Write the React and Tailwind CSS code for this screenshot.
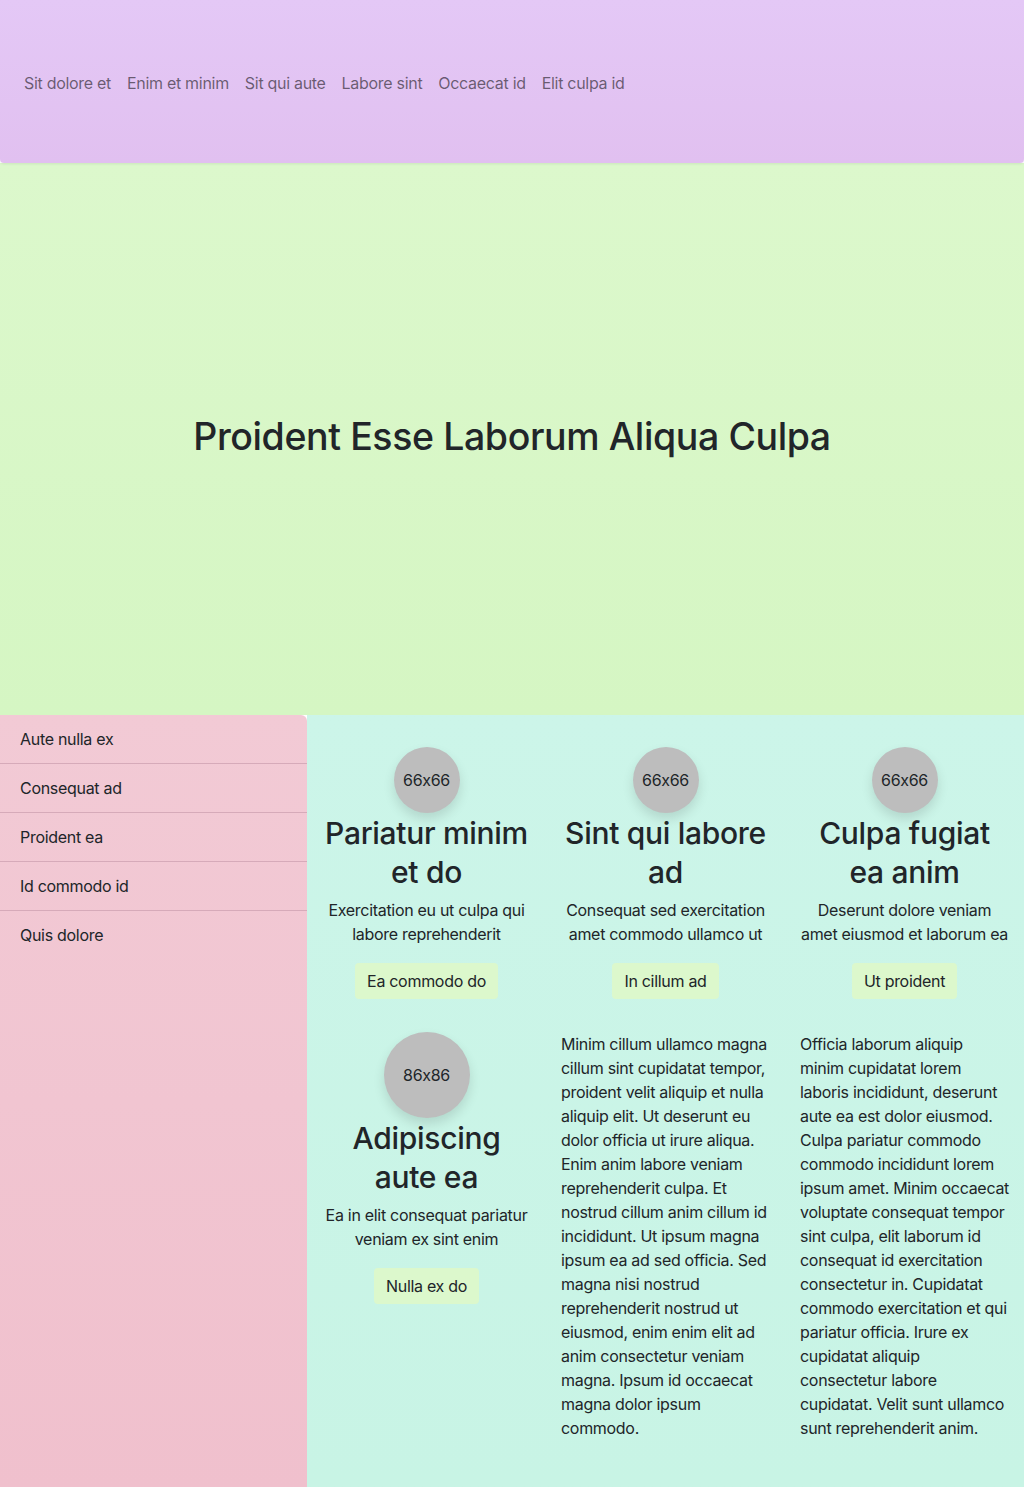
import React from 'react';

const NAV = ['Sit dolore et', 'Enim et minim', 'Sit qui aute', 'Labore sint', 'Occaecat id', 'Elit culpa id'];
const SIDE = ['Aute nulla ex', 'Consequat ad', 'Proident ea', 'Id commodo id', 'Quis dolore'];

const CARDS = [
  { size: 66, title: 'Pariatur minim et do', text: 'Exercitation eu ut culpa qui labore reprehenderit', btn: 'Ea commodo do' },
  { size: 66, title: 'Sint qui labore ad', text: 'Consequat sed exercitation amet commodo ullamco ut', btn: 'In cillum ad' },
  { size: 66, title: 'Culpa fugiat ea anim', text: 'Deserunt dolore veniam amet eiusmod et laborum ea', btn: 'Ut proident' },
];

const Card = ({ size, title, text, btn }) => (
  <div className="flex flex-col items-center text-center px-[15px]">
    <div
      className={`rounded-full bg-[#bdbdbd] flex items-center justify-center text-[16px] text-[#212529] shadow-[0_6px_12px_rgba(0,0,0,0.12)] ${size === 66 ? 'w-[66px] h-[66px]' : 'w-[86px] h-[86px]'}`}
    >
      {size}x{size}
    </div>
    <h2 className="text-[30px] leading-[39px] font-medium tracking-[-0.3px] text-[#212529] mt-[1px] mb-[6px]">{title}</h2>
    <p className="text-[16px] leading-[24px] text-[#212529] mb-[17px]">{text}</p>
    <button className="bg-[#dcf8cc] text-[#212529] text-[16px] leading-[24px] px-[12px] py-[6px] rounded-[4px]">
      {btn}
    </button>
  </div>
);

export default function App() {
  return (
    <div className="w-[1024px] min-h-[1487px] flex flex-col text-[#212529] font-['Inter','Noto_Sans',sans-serif] tracking-[-0.3px] [font-feature-settings:'calt'_0]">
      {/* Header */}
      <header className="h-[163px] bg-gradient-to-b from-[#e4c8f6] to-[#e1c0f0] rounded-b-[4px] shadow-[0_1px_3px_rgba(0,0,0,0.08)] flex items-center px-[16px] pt-[2px] relative z-10">
        <nav className="flex">
          {NAV.map((n) => (
            <a key={n} className="px-[8px] text-[16px] leading-[24px] text-black/55">{n}</a>
          ))}
        </nav>
      </header>

      {/* Hero */}
      <section className="h-[552px] bg-gradient-to-b from-[#dcf8cc] to-[#d5f6c3] flex items-center justify-center">
        <h1 className="text-[37.5px] leading-[45px] font-medium tracking-[-0.4px] text-[#212529] -mt-[6px]">Proident Esse Laborum Aliqua Culpa</h1>
      </section>

      {/* Bottom */}
      <div className="flex flex-1">
        <aside className="w-[307px] bg-gradient-to-b from-[#f2cad5] to-[#f0c0cd] rounded-tr-[6px] shrink-0">
          {SIDE.map((s) => (
            <div key={s} className="px-[20px] py-[12px] text-[16px] leading-[24px] border-b border-[#d6aab9] last:border-b-0">
              {s}
            </div>
          ))}
        </aside>
        <main className="flex-1 bg-gradient-to-b from-[#ccf5e9] to-[#c8f4e5] pt-[32px] pb-[47px]">
          <div className="grid grid-cols-3 gap-y-[33px]">
            {CARDS.map((c) => (
              <Card key={c.title} {...c} />
            ))}
            <Card size={86} title="Adipiscing aute ea" text="Ea in elit consequat pariatur veniam ex sint enim" btn="Nulla ex do" />
            <p className="px-[15px] text-[16px] leading-[24px]">
              Minim cillum ullamco magna cillum sint cupidatat tempor, proident velit aliquip et nulla aliquip elit. Ut deserunt eu dolor officia ut irure aliqua. Enim anim labore veniam reprehenderit culpa. Et nostrud cillum anim cillum id incididunt. Ut ipsum magna ipsum ea ad sed officia. Sed magna nisi nostrud reprehenderit nostrud ut eiusmod, enim enim elit ad anim consectetur veniam magna. Ipsum id occaecat magna dolor ipsum commodo.
            </p>
            <p className="px-[15px] text-[16px] leading-[24px]">
              Officia laborum aliquip minim cupidatat lorem laboris incididunt, deserunt aute ea est dolor eiusmod. Culpa pariatur commodo commodo incididunt lorem ipsum amet. Minim occaecat voluptate consequat tempor sint culpa, elit laborum id consequat id exercitation consectetur in. Cupidatat commodo exercitation et qui pariatur officia. Irure ex cupidatat aliquip consectetur labore cupidatat. Velit sunt ullamco sunt reprehenderit anim.
            </p>
          </div>
        </main>
      </div>
    </div>
  );
}
